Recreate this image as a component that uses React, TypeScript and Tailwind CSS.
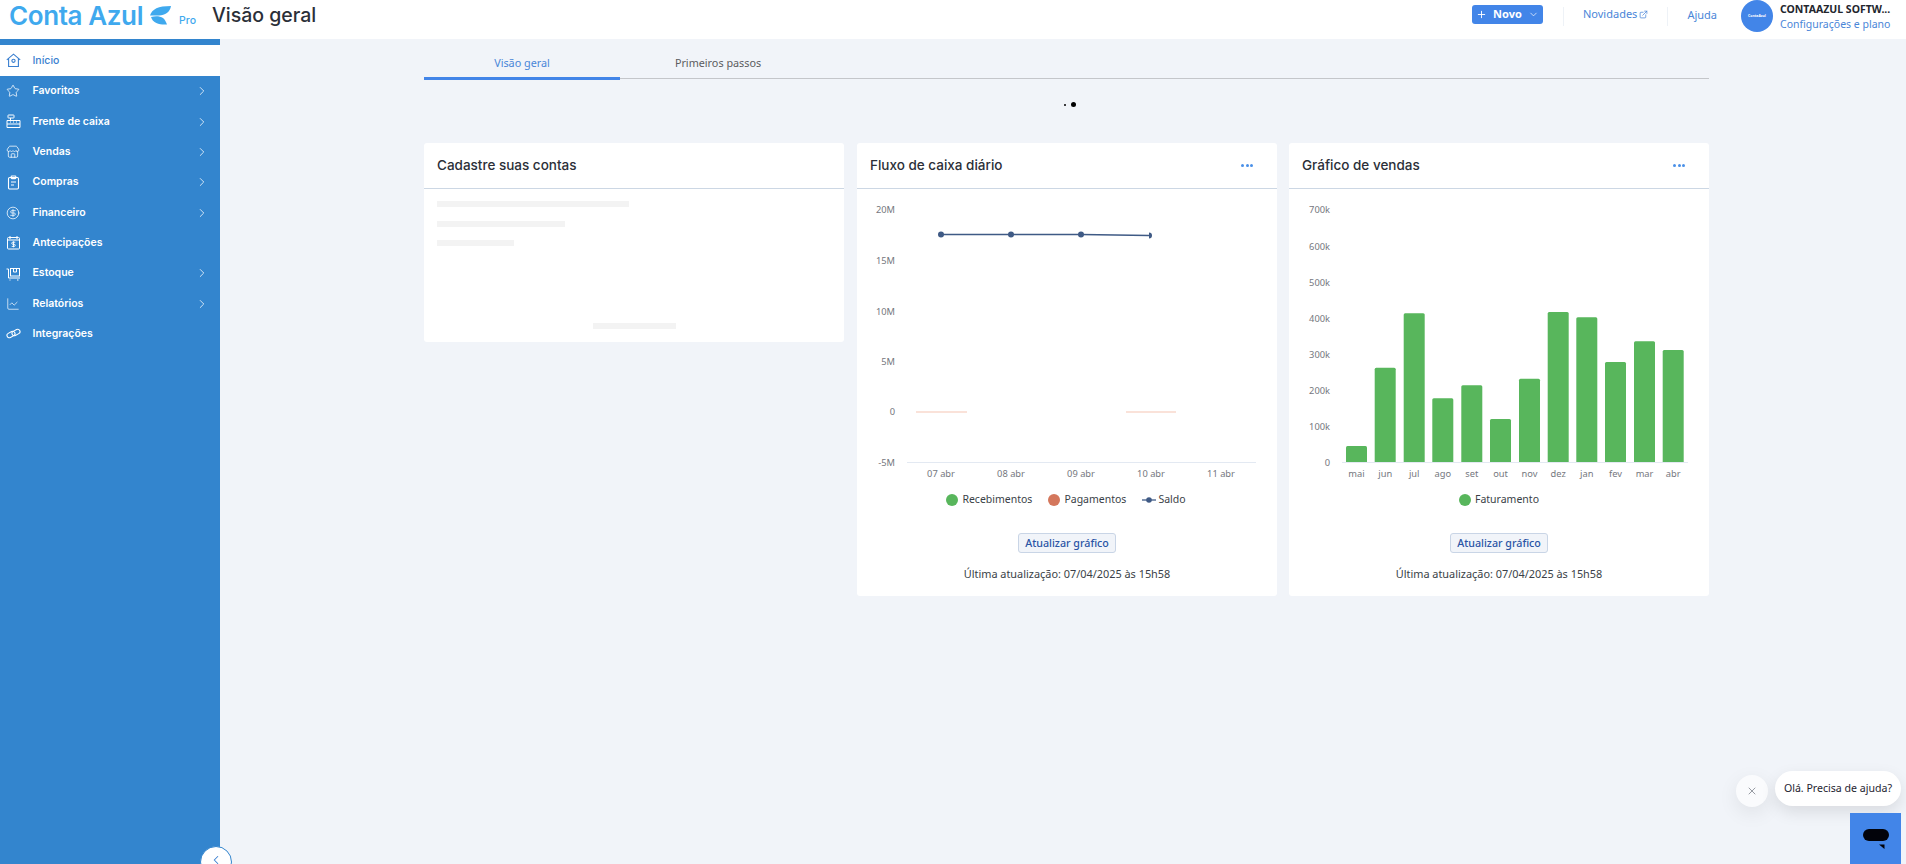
import React from "react";
import { ChevronRight, ChevronLeft, ChevronDown, Plus, ExternalLink, X, Star, Store, CircleDollarSign, ChartLine } from "lucide-react";

const HomeIcon = () => (
  <svg width="15" height="15" viewBox="0 0 15 15" fill="none" stroke="currentColor" strokeWidth="1.1">
    <path d="M0.8 6.8 7.5 1.2l6.7 5.6M2.6 5.6V13.5h9.8V5.6" />
    <circle cx="7.5" cy="7.8" r="1.6" />
  </svg>
);
const ClipIcon = () => (
  <svg width="15" height="15" viewBox="0 0 15 15" fill="none" stroke="currentColor" strokeWidth="1.1">
    <rect x="2.5" y="2.5" width="10" height="11.5" rx="1.2" />
    <rect x="5.2" y="1" width="4.6" height="2.6" rx="0.6" />
    <path d="M5 7h5M5 10h3" />
  </svg>
);
const LinkIcon = () => (
  <svg width="15" height="15" viewBox="0 0 15 15" fill="none" stroke="currentColor" strokeWidth="1.1">
    <rect x="0.8" y="6.2" width="8.4" height="4.6" rx="2.3" transform="rotate(-28 5 8.5)" />
    <rect x="5.8" y="4.2" width="8.4" height="4.6" rx="2.3" transform="rotate(-28 10 6.5)" />
  </svg>
);
const CashIcon = () => (
  <svg width="15" height="15" viewBox="0 0 15 15" fill="none" stroke="currentColor" strokeWidth="1">
    <rect x="2" y="1" width="6" height="3" rx="0.5" />
    <path d="M4.5 4v2M1 6.5h13v7H1zM1 10h13M4 8h1M7 8h1M10 8h1" />
  </svg>
);
const CalIcon = () => (
  <svg width="15" height="15" viewBox="0 0 15 15" fill="none" stroke="currentColor" strokeWidth="1">
    <rect x="1.5" y="2.5" width="12" height="11.5" rx="1" />
    <path d="M1.5 5h12M4 1v3M11 1v3" />
    <path d="M9.3 7.2H6.8a1 1 0 000 2.1h1.4a1 1 0 010 2.1H5.7M7.5 6.3v6" strokeWidth="0.9" />
  </svg>
);
const StockIcon = () => (
  <svg width="15" height="15" viewBox="0 0 15 15" fill="none" stroke="currentColor" strokeWidth="1">
    <path d="M0.5 3H2.5V12H14" />
    <rect x="4.5" y="2.5" width="9" height="7.5" />
    <path d="M7.5 2.5v3.5h3V2.5M3.5 14h1M11 14h1.5" />
  </svg>
);

const menu: [string, React.ReactNode, boolean][] = [
  ["Favoritos", <Star size={14} strokeWidth={1.3} />, true],
  ["Frente de caixa", <CashIcon />, true],
  ["Vendas", <Store size={14} strokeWidth={1.3} />, true],
  ["Compras", <ClipIcon />, true],
  ["Financeiro", <CircleDollarSign size={14} strokeWidth={1.3} />, true],
  ["Antecipações", <CalIcon />, false],
  ["Estoque", <StockIcon />, true],
  ["Relatórios", <ChartLine size={14} strokeWidth={1.2} />, true],
  ["Integrações", <LinkIcon />, false],
];

const lbl = { fontSize: 9.3, fill: "#75777e", fontFamily: "'Noto Sans', sans-serif" } as const;

function CashChart() {
  const yl: [string, number][] = [["20M", 212.5], ["15M", 263.5], ["10M", 314.5], ["5M", 365], ["0", 415], ["-5M", 466]];
  const xl: [string, number][] = [["07 abr", 941], ["08 abr", 1011], ["09 abr", 1081], ["10 abr", 1151], ["11 abr", 1221]];
  return (
    <svg width="420" height="303" viewBox="857 189 420 303" className="block">
      {yl.map(([t, y]) => <text key={t} x="895" y={y} textAnchor="end" style={lbl}>{t}</text>)}
      <line x1="907" x2="1256" y1="462.5" y2="462.5" stroke="#e3e9f2" strokeWidth="1.2" />
      {xl.map(([t, x]) => <text key={t} x={x} y="477" textAnchor="middle" style={lbl}>{t}</text>)}
      <line x1="916" x2="967" y1="412" y2="412" stroke="#f5c6b4" strokeWidth="1.2" />
      <line x1="1126" x2="1176" y1="412" y2="412" stroke="#f5c6b4" strokeWidth="1.2" />
      <polyline points="941,234.4 1011,234.4 1081,234.4 1149,235.5" fill="none" stroke="#3f5a85" strokeWidth="1.5" />
      {[[941, 234.4], [1011, 234.4], [1081, 234.4]].map(([x, y]) => <circle key={x} cx={x} cy={y} r="3" fill="#3f5a85" />)}
      <path d="M1149 232.5a3 3 0 010 6z" fill="#3f5a85" />
    </svg>
  );
}

const bars: [string, number, number][] = [
  ["mai", 1346, 446], ["jun", 1374.7, 367.7], ["jul", 1403.7, 313.3], ["ago", 1432.3, 398.3], ["set", 1461.3, 385.3], ["out", 1490, 419],
  ["nov", 1519, 378.7], ["dez", 1547.7, 312], ["jan", 1576.3, 317.3], ["fev", 1605, 362], ["mar", 1634, 341.3], ["abr", 1662.7, 350],
];

function SalesChart() {
  const yl: [string, number][] = [["700k", 213], ["600k", 250], ["500k", 286], ["400k", 322], ["300k", 358], ["200k", 394], ["100k", 430], ["0", 466]];
  return (
    <svg width="420" height="303" viewBox="1289 189 420 303" className="block">
      {yl.map(([t, y]) => <text key={t} x="1330" y={y} textAnchor="end" style={lbl}>{t}</text>)}
      {bars.map(([t, x, top]) => (
        <g key={t}>
          <rect x={x} y={top} width="21" height={462 - top + 1} rx="1.5" fill="#58b65c" />
          <text x={x + 10.5} y="477" textAnchor="middle" style={lbl}>{t}</text>
        </g>
      ))}
      <line x1="1342" x2="1688" y1="462.5" y2="462.5" stroke="#e3e9f2" strokeWidth="1.2" />
    </svg>
  );
}

function Footer() {
  return (
    <div className="flex flex-col items-center">
      <button className="mt-[25px] h-[20px] w-[98px] rounded-[3px] border border-[#c9d5e6] bg-[#f1f4f9] text-[10.7px] font-medium leading-[18px] text-[#2a55a5]">
        Atualizar gráfico
      </button>
      <div className="mt-[13px] text-[10.9px] leading-[16px] text-[#3a3f47]">Última atualização: 07/04/2025 às 15h58</div>
    </div>
  );
}

function CardHead({ title, dots }: { title: string; dots?: boolean }) {
  return (
    <div className="flex h-[46px] items-center justify-between border-b border-[#ccd7e4] pb-[1px] pl-[13px] pr-[24px]">
      <span className="font-['Inter',sans-serif] text-[13.5px] font-medium text-[#2b2f38]">{title}</span>
      {dots && (
        <span className="flex gap-[1.5px]">
          <i className="h-[3px] w-[3px] rounded-full bg-[#4a90e8]" />
          <i className="h-[3px] w-[3px] rounded-full bg-[#4a90e8]" />
          <i className="h-[3px] w-[3px] rounded-full bg-[#4a90e8]" />
        </span>
      )}
    </div>
  );
}

export default function App() {
  return (
    <div className="relative flex h-[864px] w-[1906px] flex-col overflow-hidden bg-[#f1f4f9] font-['Noto_Sans',sans-serif]">
      <header className="flex h-[39px] shrink-0 items-start bg-white">
        <div className="flex w-[212px] items-start pl-[9px]">
          <span className="font-['Inter',sans-serif] text-[26px] font-semibold leading-[32px] tracking-[-0.4px] text-[#3fa9ee]">Conta Azul</span>
          <svg width="22" height="20" viewBox="0 0 22 20" className="ml-[7px] mt-[6px]" fill="#3fa9ee">
            <path d="M0 9.5C2 3 8 0 21 0 20 6 15 9.5 9 9.5Z" />
            <path d="M1 11C5 10 10 10 13 12 15 13.5 16 16 17 18.5 11 19 3 18 1 11Z" />
          </svg>
          <span className="ml-[7px] mt-[14px] font-['Inter',sans-serif] text-[10.5px] font-medium leading-[14px] text-[#3fa9ee]">Pro</span>
        </div>
        <h1 className="font-['Inter',sans-serif] text-[19.5px] font-medium leading-[30px] text-[#2b2f38]">Visão geral</h1>
        <div className="ml-auto flex items-start">
          <button className="mt-[5px] flex h-[19px] w-[71px] items-center justify-center gap-[6px] rounded-[3px] bg-[#4285e8] text-[11px] font-bold text-white">
            <Plus size={11} strokeWidth={2} />
            <span>Novo</span>
            <ChevronDown size={11} strokeWidth={1.5} />
          </button>
          <i className="ml-[20px] mt-[7px] h-[19px] w-[1px] bg-[#eef2f7]" />
          <span className="ml-[19px] mt-[6px] flex items-center gap-[2px] text-[11px] leading-[16px] text-[#4a86d8]">Novidades <ExternalLink size={9} /></span>
          <i className="ml-[19px] mt-[7px] h-[19px] w-[1px] bg-[#eef2f7]" />
          <span className="ml-[19px] mt-[7px] text-[11px] leading-[16px] text-[#4a86d8]">Ajuda</span>
          <div className="ml-[24px] flex h-[32px] w-[32px] items-center justify-center rounded-full bg-[#4285e8] text-[3.5px] font-bold text-white">ContaAzul</div>
          <div className="ml-[7px] w-[126px] pt-[1px]">
            <div className="text-[10.5px] font-bold leading-[16px] text-[#23262d]">CONTAAZUL SOFTW...</div>
            <div className="text-[10.5px] leading-[14px] text-[#4a86d8]">Configurações e plano</div>
          </div>
        </div>
      </header>

      <div className="flex min-h-0 flex-1">
        <aside className="w-[220px] shrink-0 bg-[#3385ce] pt-[6px] text-white">
          <div className="flex h-[31px] items-center bg-white pl-[6px] text-[#3a7fd0]">
            <span className="flex w-[26.5px]"><HomeIcon /></span>
            <span className="font-['Inter',sans-serif] text-[10.5px] font-medium">Início</span>
          </div>
          {menu.map(([t, ic, arrow]) => (
            <div key={t} className="flex h-[30.35px] items-center pl-[6px] pr-[11px]">
              <span className="flex w-[26.5px]">{ic}</span>
              <span className="font-['Inter',sans-serif] text-[10.5px] font-semibold">{t}</span>
              {arrow && <ChevronRight size={14} strokeWidth={1.3} className="ml-auto" />}
            </div>
          ))}
        </aside>

        <main className="min-w-0 flex-1 pl-[204px]">
          <div className="w-[1285px]">
            <div className="flex h-[40px] border-b-[1.5px] border-[#c4c6ca]">
              <div className="relative h-[40px] w-[196px] pt-[16px] text-center text-[10.8px] leading-[16px] text-[#4a86d8]">
                Visão geral
                <i className="absolute bottom-[-1px] left-0 h-[3px] w-full bg-[#4285e8]" />
              </div>
              <div className="h-[40px] w-[196px] pt-[16px] text-center text-[10.8px] leading-[16px] text-[#5c5c60]">Primeiros passos</div>
            </div>
            <div className="flex h-[64px] items-start justify-center gap-[5px] pl-[6px] pt-[23px]">
              <i className="mt-[1.5px] h-[2px] w-[2px] rounded-full bg-black" />
              <i className="h-[5px] w-[5px] rounded-full bg-black" />
            </div>
            <div className="flex items-start">
              <section className="h-[199px] w-[420px] rounded-[3px] bg-white">
                <CardHead title="Cadastre suas contas" />
                <div className="flex flex-col pl-[13px] pt-[12px]">
                  <i className="h-[6px] w-[192px] bg-[#f3f3f3]" />
                  <i className="mt-[14px] h-[6px] w-[128px] bg-[#f3f3f3]" />
                  <i className="mt-[13px] h-[6px] w-[77px] bg-[#f3f3f3]" />
                  <i className="ml-[156px] mt-[77px] h-[6px] w-[83px] bg-[#f3f3f3]" />
                </div>
              </section>
              <section className="ml-[13px] h-[453px] w-[420px] rounded-[3px] bg-white">
                <CardHead title="Fluxo de caixa diário" dots />
                <CashChart />
                <div className="flex h-[16px] items-center justify-center pr-[2px] text-[10.5px] text-[#3a3f47]">
                  <i className="h-[12px] w-[12px] rounded-full bg-[#58b65c]" />
                  <span className="ml-[4px]">Recebimentos</span>
                  <i className="ml-[16px] h-[12px] w-[12px] rounded-full bg-[#d4775c]" />
                  <span className="ml-[4px]">Pagamentos</span>
                  <svg width="14" height="8" viewBox="0 0 14 8" className="ml-[16px]"><line x1="0" x2="14" y1="4" y2="4" stroke="#3f5a85" strokeWidth="1.3" /><circle cx="7" cy="4" r="2.8" fill="#3f5a85" /></svg>
                  <span className="ml-[2px]">Saldo</span>
                </div>
                <Footer />
              </section>
              <section className="ml-[12px] h-[453px] w-[420px] rounded-[3px] bg-white">
                <CardHead title="Gráfico de vendas" dots />
                <SalesChart />
                <div className="flex h-[16px] items-center justify-center text-[10.5px] text-[#3a3f47]">
                  <i className="h-[12px] w-[12px] rounded-full bg-[#58b65c]" />
                  <span className="ml-[4px]">Faturamento</span>
                </div>
                <Footer />
              </section>
            </div>
          </div>
        </main>
      </div>

      <button className="absolute left-[200px] top-[846px] flex h-[32px] w-[32px] items-start justify-center rounded-full border border-[#3385ce] bg-white pt-[6px] text-[#3a7fd0]">
        <ChevronLeft size={14} strokeWidth={1.8} />
      </button>

      <div className="absolute left-[1736px] top-[775px] flex h-[32px] w-[32px] items-center justify-center rounded-full bg-[#fafbfd] text-[#555a66] shadow-[0_6px_20px_rgba(0,0,0,0.08)]">
        <X size={12} strokeWidth={1.2} />
      </div>
      <div className="absolute left-[1775px] top-[771px] flex h-[35px] w-[126px] items-center justify-center rounded-full bg-white text-[10.6px] text-[#1e2430] shadow-[0_6px_16px_rgba(0,0,0,0.1)]">
        Olá. Precisa de ajuda?
      </div>
      <div className="absolute left-[1850px] top-[813px] flex h-[51px] w-[51px] items-center justify-center bg-[#4285e8]">
        <svg width="26" height="20" viewBox="0 0 26 20"><rect x="0" y="0" width="26" height="12" rx="6" fill="#02030a" /><path d="M16 15.5h5.5v4.5z" fill="#02030a" /></svg>
      </div>
    </div>
  );
}
